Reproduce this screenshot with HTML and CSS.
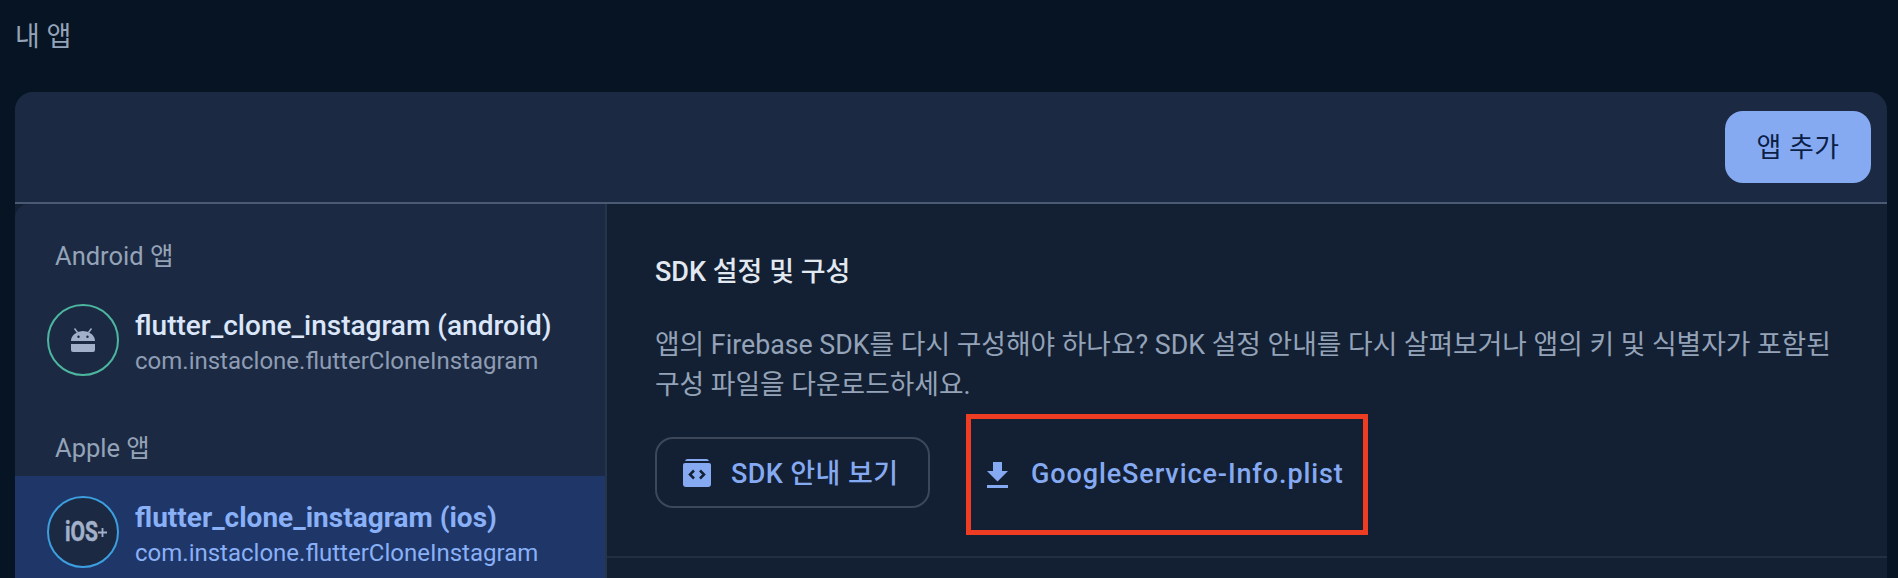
FILE: index.html
```html
<!DOCTYPE html>
<html lang="ko">
<head>
<meta charset="utf-8">
<title>내 앱</title>
<link rel="stylesheet" href="styles.css">
</head>
<body>
<div class="page">
  <h1 class="page-title">내 앱</h1>
  <section class="card">
    <header class="card-head">
      <button class="add-btn">앱 추가</button>
    </header>
    <div class="card-body">
      <aside class="sidebar">
        <div class="group-label">Android 앱</div>
        <div class="app-row">
          <span class="avatar avatar-android">
            <svg class="android-icon" width="24" height="24" viewBox="0 0 24 24">
              <path class="glyph" d="M0 13a12 10 0 0 1 24 0z"/>
              <path class="glyph" d="M0 16h24v6a2 2 0 0 1-2 2H2a2 2 0 0 1-2-2z"/>
              <path class="antenna" d="M3.5 0.5l3 4M20.500 0.5l-3 4"/>
              <circle class="eye" cx="7.500" cy="8.800" r="1.200"/>
              <circle class="eye" cx="16.500" cy="8.800" r="1.200"/>
            </svg>
          </span>
          <div class="app-text">
            <div class="app-name">flutter_clone_instagram (android)</div>
            <div class="app-id">com.instaclone.flutterCloneInstagram</div>
          </div>
        </div>
        <div class="group-label group-gap">Apple 앱</div>
        <div class="app-row selected">
          <span class="avatar avatar-ios">
            <svg width="50" height="36" viewBox="0 0 50 36">
              <text class="ios-text" x="7" y="27" textLength="33" lengthAdjust="spacingAndGlyphs">iOS</text>
              <path class="ios-plus" d="M40 18.500h9M44.500 14v9"/>
            </svg>
          </span>
          <div class="app-text">
            <div class="app-name">flutter_clone_instagram (ios)</div>
            <div class="app-id">com.instaclone.flutterCloneInstagram</div>
          </div>
        </div>
      </aside>
      <main class="main">
        <div class="sdk-section">
          <h2 class="section-title">SDK 설정 및 구성</h2>
          <p class="section-text">앱의 Firebase SDK를 다시 구성해야 하나요? SDK 설정 안내를 다시 살펴보거나 앱의 키 및 식별자가 포함된<br>구성 파일을 다운로드하세요.</p>
          <div class="actions">
            <button class="outline-btn">
              <svg width="28" height="28" viewBox="0 0 28 28">
                <path class="icon-fill" d="M5 0h18a3 3 0 0 1 3 2H2a3 3 0 0 1 3-2z"/>
                <path class="icon-fill" d="M0 6a2 2 0 0 1 2-2h24a2 2 0 0 1 2 2v19a3 3 0 0 1-3 3H3a3 3 0 0 1-3-3z"/>
                <path class="icon-cut" d="M11 11.500l-4 4 4 4M17 11.500l4 4-4 4"/>
              </svg>
              <span class="btn-label">SDK 안내 보기</span>
            </button>
            <div class="highlight">
              <button class="text-btn">
                <svg width="21" height="26" viewBox="0 0 21 26">
                  <path class="icon-fill" d="M6 0h9v9h6L10.500 19.500 0 9h6z"/>
                  <path class="icon-fill" d="M0 23h21v3H0z"/>
                </svg>
                <span class="btn-label file-label">GoogleService-Info.plist</span>
              </button>
            </div>
          </div>
        </div>
      </main>
    </div>
  </section>
</div>
</body>
</html>
```

FILE: styles.css
```css
* { box-sizing: border-box; }
html, body {
  margin: 0;
  height: 100%;
  overflow: hidden;
  background: #061423;
}
body {
  font-family: Roboto, "Noto Sans CJK KR", sans-serif;
}
button {
  font-family: inherit;
  cursor: pointer;
}
.page {
  height: 100%;
  padding: 0 11px 0 15px;
  display: flex;
  flex-direction: column;
  overflow: hidden;
}
.page-title {
  flex: none;
  margin: 0;
  height: 92px;
  padding-top: 17px;
  font-size: 27px;
  line-height: 40px;
  font-weight: 400;
  color: #94a3b8;
}
.card {
  flex: 1;
  min-height: 0;
  background: #132033;
  border-radius: 18px 18px 0 0;
  display: flex;
  flex-direction: column;
}
.card-head {
  flex: none;
  height: 112px;
  background: #1b2a42;
  border-bottom: 2px solid #4a5a72;
  border-radius: 18px 18px 0 0;
  padding: 19px 16px 0 0;
  display: flex;
  justify-content: flex-end;
  align-items: flex-start;
}
.add-btn {
  width: 146px;
  height: 72px;
  padding: 0 0 3px;
  border: 0;
  border-radius: 18px;
  background: #86aaf2;
  color: #0b1f47;
  font-size: 27px;
  letter-spacing: 0.4px;
  font-weight: 400;
}
.card-body {
  flex: 1;
  min-height: 0;
  display: flex;
}
.sidebar {
  flex: none;
  width: 592px;
  background: #1b2a42;
  border-right: 2px solid #263449;
  border-top-left-radius: 14px;
  padding-top: 31px;
  overflow: hidden;
}
.group-label {
  height: 42px;
  margin-bottom: 7px;
  padding-left: 40px;
  font-size: 25.500px;
  line-height: 42px;
  color: #94a3b8;
}
.group-gap {
  margin-top: 32px;
}
.app-row {
  height: 111px;
  padding: 20px 0 0 32px;
  display: flex;
  align-items: flex-start;
  gap: 16px;
}
.app-row.selected {
  background: #1e3768;
}
.avatar {
  flex: none;
  width: 72px;
  height: 72px;
  border-radius: 50%;
  border: 2px solid;
  display: flex;
  align-items: center;
  justify-content: center;
  background: #1b2a42;
}
.avatar-android { border-color: #4db6a0; }
.avatar-ios { border-color: #3d9fe0; }
.glyph { fill: #a3b0c9; }
.antenna {
  stroke: #a3b0c9;
  stroke-width: 1.500;
  fill: none;
}
.eye { fill: #1b2a42; }
.ios-text {
  font-family: Roboto, sans-serif;
  font-weight: 700;
  font-size: 27px;
  fill: #a3b0c9;
  stroke: #a3b0c9;
  stroke-width: 0.500;
}
.ios-plus {
  stroke: #a3b0c9;
  stroke-width: 1.800;
  fill: none;
}
.app-text {
  min-width: 0;
  padding-top: 3px;
}
.app-name {
  font-size: 28px;
  line-height: 38px;
  font-weight: 500;
  color: #dbe6fb;
  white-space: nowrap;
}
.app-id {
  font-size: 24px;
  line-height: 32px;
  color: #8e9cb4;
  white-space: nowrap;
}
.selected .app-name { color: #8ab0f7; font-weight: 700; }
.selected .app-id { color: #8ab0f7; }
.main {
  flex: 1;
  min-width: 0;
}
.sdk-section {
  padding: 50px 0 21px 48px;
  border-bottom: 2px solid #222f43;
}
.section-title {
  margin: 0 0 36px;
  font-size: 27px;
  line-height: 36px;
  font-weight: 500;
  color: #e2e8f0;
}
.section-text {
  margin: 0 0 9px;
  font-size: 26.750px;
  line-height: 39.500px;
  color: #94a3b8;
  white-space: nowrap;
}
.actions {
  display: flex;
  align-items: flex-start;
  gap: 36px;
}
.outline-btn {
  margin-top: 23px;
  width: 275px;
  height: 71px;
  padding: 0 0 0 26px;
  border: 2px solid #3c4859;
  border-radius: 18px;
  background: transparent;
  color: #86aaf2;
  font-size: 27px;
  letter-spacing: 0.4px;
  font-weight: 500;
  display: flex;
  align-items: center;
  gap: 20px;
}
.highlight {
  border: 5px solid #ee3d23;
  width: 402px;
  height: 121px;
  display: flex;
  align-items: center;
}
.text-btn {
  border: 0;
  background: transparent;
  padding: 0 0 0 16px;
  color: #86aaf2;
  font-size: 27px;
  font-weight: 500;
  display: flex;
  align-items: center;
  gap: 23px;
}
.btn-label {
  padding-bottom: 2px;
}
.file-label {
  letter-spacing: 0.9px;
}
.icon-fill { fill: #86aaf2; }
.icon-cut {
  stroke: #132033;
  stroke-width: 2.500;
  fill: none;
}
```
